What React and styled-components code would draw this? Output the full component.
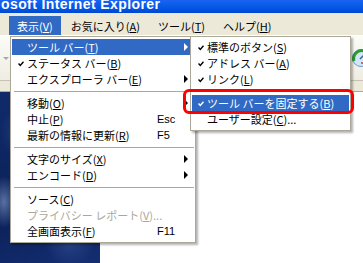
import styled, { createGlobalStyle } from "styled-components";

const GlobalStyle = createGlobalStyle`
  body {
    margin: 0;
    background: #fff;
  }
`;

const Window = styled.div`
  position: relative;
  width: 363px;
  height: 263px;
  overflow: hidden;
  display: flex;
  flex-direction: column;
  font-family: "Noto Sans CJK JP", "Liberation Sans", sans-serif;
  font-size: 11px;
  color: #000;
`;

const TitleBar = styled.div`
  height: 13px;
  flex: 0 0 13px;
  overflow: hidden;
  background: linear-gradient(#1a63f0, #0055e5 70%, #0047cc);
  color: #fff;
  font-family: "Liberation Sans", sans-serif;
  font-weight: bold;
  font-size: 14px;
  line-height: 13px;
  padding-left: 1px;
  white-space: nowrap;
`;

const TitleText = styled.span`
  display: block;
  margin-top: -2px;
  letter-spacing: 0.4px;
`;

const MenuBar = styled.div`
  height: 22px;
  flex: 0 0 22px;
  background: #ece9d8;
  display: flex;
  align-items: flex-end;
  padding-left: 9px;
  gap: 2px;
`;

const MenuTitle = styled.div`
  height: 19px;
  display: flex;
  align-items: center;
  padding: 0 8px;
  white-space: nowrap;
  background: ${(p) => (p.$open ? "#316ac5" : "transparent")};
  color: ${(p) => (p.$open ? "#fff" : "#000")};
`;

const Toolbar = styled.div`
  height: 44px;
  flex: 0 0 44px;
  border-top: 1px solid #fff;
  border-bottom: 1px solid #c7c3b4;
  background: linear-gradient(#fbfbf8, #efede2);
  display: flex;
  align-items: center;
  justify-content: space-between;
`;

const DropArrow = styled.span`
  margin-left: 3px;
  width: 0;
  height: 0;
  border-left: 3px solid transparent;
  border-right: 3px solid transparent;
  border-top: 3px solid #a8a8a8;
`;

const Globe = styled.svg`
  width: 20px;
  height: 20px;
  margin-right: -8px;
`;

const AddressBar = styled.div`
  height: 10px;
  flex: 0 0 10px;
  background: #ece9d8;
  border-bottom: 1px solid #aca899;
`;

const Content = styled.div`
  flex: 1;
  display: flex;
`;

const NightPicture = styled.div`
  width: 100px;
  background:
    radial-gradient(ellipse 14px 26px at 4px 110px, rgba(150, 175, 220, 0.55), transparent),
    radial-gradient(circle at 30px 40px, rgba(70, 100, 170, 0.5), transparent 30px),
    radial-gradient(circle at 70px 150px, rgba(60, 90, 160, 0.5), transparent 25px),
    linear-gradient(160deg, #102a6a, #0b2158 60%, #142e72);
`;

const Page = styled.div`
  flex: 1;
  background: #fff;
`;

const Menu = styled.div`
  position: absolute;
  left: ${(p) => p.$left}px;
  top: ${(p) => p.$top}px;
  width: ${(p) => p.$width}px;
  box-sizing: border-box;
  background: #fff;
  border: 1px solid #aca899;
  padding: 2px 1px 3px;
  box-shadow: 2px 2px 2px rgba(0, 0, 0, 0.3);
`;

const Item = styled.div`
  height: 16px;
  display: grid;
  grid-template-columns: 15px ${(p) => p.$labelWidth || 130}px 1fr;
  align-items: center;
  white-space: nowrap;
  background: ${(p) => (p.$active ? "#316ac5" : "transparent")};
  color: ${(p) => (p.$active ? "#fff" : p.$disabled ? "#aca899" : "#000")};
`;

const CheckCell = styled.span`
  display: flex;
  justify-content: flex-end;
  padding-right: 3px;
  padding-top: 2px;
`;

const Shortcut = styled.span`
  display: flex;
  justify-content: space-between;
  align-items: center;
  font-family: "Liberation Sans", sans-serif;
  font-size: 11px;
`;

const Arrow = styled.span`
  margin-left: auto;
  margin-right: 6px;
  width: 0;
  height: 0;
  border-top: 4px solid transparent;
  border-bottom: 4px solid transparent;
  border-left: 4px solid ${(p) => (p.$active ? "#fff" : "#000")};
`;

const Separator = styled.div`
  height: 8px;
  display: flex;
  align-items: center;
  padding-left: 2px;
  &::after {
    content: "";
    flex: 1;
    height: 1px;
    background: #aca899;
  }
`;

const Callout = styled.div`
  position: absolute;
  left: 183px;
  top: 89px;
  width: 171px;
  height: 25px;
  box-sizing: border-box;
  border: 3px solid #ff0000;
  border-radius: 6px;
`;

function Check() {
  return (
    <svg width="6" height="6" viewBox="0 0 6 6">
      <path d="M0.5 2.5 L2.3 4.5 L5.5 0.8" fill="none" stroke="currentColor" strokeWidth="1.4" />
    </svg>
  );
}

function Label({ text, mn, tail }) {
  return (
    <span>
      {text}(<u>{mn}</u>){tail}
    </span>
  );
}

const viewItems = [
  { text: "ツール バー", mn: "T", sub: true, active: true },
  { text: "ステータス バー", mn: "B", check: true },
  { text: "エクスプローラ バー", mn: "E", sub: true },
  "sep",
  { text: "移動", mn: "O", sub: true },
  { text: "中止", mn: "P", key: "Esc" },
  { text: "最新の情報に更新", mn: "R", key: "F5" },
  "sep",
  { text: "文字のサイズ", mn: "X", sub: true },
  { text: "エンコード", mn: "D", sub: true },
  "sep",
  { text: "ソース", mn: "C" },
  { text: "プライバシー レポート", mn: "V", tail: "...", disabled: true },
  { text: "全画面表示", mn: "F", key: "F11" },
];

const toolbarItems = [
  { text: "標準のボタン", mn: "S", check: true },
  { text: "アドレス バー", mn: "A", check: true },
  { text: "リンク", mn: "L", check: true },
  "sep",
  { text: "ツール バーを固定する", mn: "B", check: true, active: true },
  { text: "ユーザー設定", mn: "C", tail: "..." },
];

function MenuList({ items, labelWidth }) {
  return items.map((it, i) =>
    it === "sep" ? (
      <Separator key={i} />
    ) : (
      <Item key={i} $active={it.active} $disabled={it.disabled} $labelWidth={labelWidth}>
        <CheckCell>{it.check && <Check />}</CheckCell>
        <Label text={it.text} mn={it.mn} tail={it.tail} />
        <Shortcut>
          {it.key && <span>{it.key}</span>}
          {it.sub && <Arrow $active={it.active} />}
        </Shortcut>
      </Item>
    )
  );
}

export default function App() {
  return (
    <Window>
      <GlobalStyle />
      <TitleBar>
        <TitleText>osoft Internet Explorer</TitleText>
      </TitleBar>
      <MenuBar>
        <MenuTitle $open>
          <Label text="表示" mn="V" />
        </MenuTitle>
        <MenuTitle>
          <Label text="お気に入り" mn="A" />
        </MenuTitle>
        <MenuTitle>
          <Label text="ツール" mn="T" />
        </MenuTitle>
        <MenuTitle>
          <Label text="ヘルプ" mn="H" />
        </MenuTitle>
      </MenuBar>
      <Toolbar>
        <DropArrow />
        <Globe viewBox="0 0 20 20">
          <circle cx="10" cy="10" r="8.5" fill="#cfe6fb" stroke="#6f9cc9" />
          <path d="M3 13 A8 8 0 0 1 13 3" fill="none" stroke="#2d9a2d" strokeWidth="3" />
          <path d="M9 11 L13 7" stroke="#3a5f8a" strokeWidth="1.5" />
          <circle cx="11" cy="15" r="1" fill="#e03a2a" />
        </Globe>
      </Toolbar>
      <AddressBar />
      <Content>
        <NightPicture />
        <Page />
      </Content>
      <Menu $left={10} $top={36} $width={186}>
        <MenuList items={viewItems} labelWidth={130} />
      </Menu>
      <Menu $left={190} $top={36} $width={161}>
        <MenuList items={toolbarItems} labelWidth={140} />
      </Menu>
      <Callout />
    </Window>
  );
}
